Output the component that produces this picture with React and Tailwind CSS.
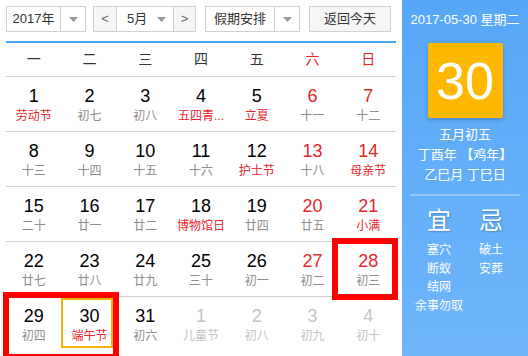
import React from 'react';

const font = { fontFamily: '"Liberation Sans", "Noto Sans CJK SC", sans-serif' };

const weeks = [
  [['1', '劳动节', 'f'], ['2', '初七'], ['3', '初八'], ['4', '五四青...', 'f'], ['5', '立夏', 'f'], ['6', '十一', 'w'], ['7', '十二', 'w']],
  [['8', '十三'], ['9', '十四'], ['10', '十五'], ['11', '十六'], ['12', '护士节', 'f'], ['13', '十八', 'w'], ['14', '母亲节', 'wf']],
  [['15', '二十'], ['16', '廿一'], ['17', '廿二'], ['18', '博物馆日', 'f'], ['19', '廿四'], ['20', '廿五', 'w'], ['21', '小满', 'wf']],
  [['22', '廿七'], ['23', '廿八'], ['24', '廿九'], ['25', '三十'], ['26', '初一'], ['27', '初二', 'w'], ['28', '初三', 'w']],
  [['29', '初四'], ['30', '端午节', 'f'], ['31', '初六'], ['1', '儿童节', 'o'], ['2', '初八', 'o'], ['3', '初九', 'o'], ['4', '初十', 'o']],
];

function Caret() {
  return (
    <svg width="9" height="5" viewBox="0 0 9 5">
      <path d="M0 0 L9 0 L4.5 5 Z" fill="#999" />
    </svg>
  );
}

function Cell({ d }) {
  const [num, lunar, kind = ''] = d;
  const other = kind.includes('o');
  const numColor = other ? 'text-[#c4c4c4]' : kind.includes('w') ? 'text-[#e3262b]' : 'text-black';
  const lunarColor = other ? 'text-[#c4c4c4]' : kind.includes('f') ? 'text-[#e3262b]' : 'text-[#8c8c8c]';
  return (
    <div className="flex flex-col items-center pt-[9px]">
      <span className={`text-[18px] leading-[20px] ${numColor}`}>{num}</span>
      <span className={`text-[12px] leading-[20px] whitespace-nowrap ${lunarColor}`}>{lunar}</span>
    </div>
  );
}

export default function App() {
  return (
    <div className="relative flex w-[528px] h-[356px] bg-white overflow-hidden" style={font}>
      <div className="w-[402px] px-[6px] pt-[6px]">
        <div className="flex items-center h-[26px] text-[13px] text-[#333] whitespace-nowrap">
          <div className="flex h-full w-[80px] border border-[#d0d0d0]">
            <div className="flex-1 flex items-center justify-center border-r border-[#d0d0d0]">2017年</div>
            <div className="w-[24px] flex items-center justify-center"><Caret /></div>
          </div>
          <div className="flex h-full w-[103px] ml-[7px] border border-[#d0d0d0]">
            <div className="w-[23px] flex items-center justify-center bg-[#f5f5f5] border-r border-[#d0d0d0] text-[#666]">&lt;</div>
            <div className="flex-1 flex items-center justify-between pl-[10px] pr-[7px]">5月<Caret /></div>
            <div className="w-[22px] flex items-center justify-center bg-[#f5f5f5] border-l border-[#d0d0d0] text-[#666]">&gt;</div>
          </div>
          <div className="flex h-full w-[95px] ml-[9px] border border-[#d0d0d0]">
            <div className="flex-1 flex items-center justify-center border-r border-[#d0d0d0]">假期安排</div>
            <div className="w-[24px] flex items-center justify-center"><Caret /></div>
          </div>
          <div className="flex h-full w-[82px] ml-[9px] items-center justify-center border border-[#d0d0d0] bg-[#f6f6f6]">返回今天</div>
        </div>
        <div className="mt-[9px] h-[2px] bg-[#4ba4f2]" />
        <div className="grid grid-cols-7 h-[34px] items-center text-center text-[14px] text-[#333] border-b border-[#cfcfcf]">
          <span>一</span><span>二</span><span>三</span><span>四</span><span>五</span>
          <span className="text-[#e3262b]">六</span><span className="text-[#e3262b]">日</span>
        </div>
        {weeks.map((w, i) => (
          <div key={i} className={`grid grid-cols-7 h-[55px] ${i < 4 ? 'border-b border-[#cfcfcf]' : ''}`}>
            {w.map((d, j) => <Cell key={j} d={d} />)}
          </div>
        ))}
      </div>

      <div className="flex-1 flex flex-col items-center bg-gradient-to-b from-[#56a6f7] to-[#6fb6fb] text-white">
        <div className="mt-[11px] text-[13px] leading-[18px]">2017-05-30 星期二</div>
        <div className="mt-[14px] w-[75px] h-[75px] rounded-[2px] bg-[#ffb800] shadow-[0_2px_4px_rgba(0,0,0,0.2)] flex items-center justify-center text-[52px] leading-none">30</div>
        <div className="mt-[7px] flex flex-col items-center text-[13px] leading-[20px]">
          <span>五月初五</span>
          <span>丁酉年 【鸡年】</span>
          <span>乙巳月 丁巳日</span>
        </div>
        <div className="mt-[9px] w-[110px] h-[2px] bg-[#95c9fb]" />
        <div className="mt-[11px] flex w-full px-[12px] justify-between">
          <div className="w-[50px] flex flex-col items-center">
            <span className="text-[24px] leading-[28px] [text-shadow:1px_1px_2px_rgba(0,0,0,0.25)]">宜</span>
            <div className="mt-[6px] flex flex-col items-center text-[12px] leading-[18.5px] whitespace-nowrap">
              <span>塞穴</span><span>断蚁</span><span>结网</span><span>余事勿取</span>
            </div>
          </div>
          <div className="w-[50px] flex flex-col items-center">
            <span className="text-[24px] leading-[28px] [text-shadow:1px_1px_2px_rgba(0,0,0,0.25)]">忌</span>
            <div className="mt-[6px] flex flex-col items-center text-[12px] leading-[18.5px]">
              <span>破土</span><span>安葬</span>
            </div>
          </div>
        </div>
      </div>

      <div className="absolute left-[61px] top-[298px] w-[52px] h-[50px] border-2 border-[#f5b400]" />
      <div className="absolute left-[332px] top-[238px] w-[66px] h-[62px] border-[6px] border-[#ff0000]" />
      <div className="absolute left-[3px] top-[292px] w-[116px] h-[68px] border-[6px] border-[#ff0000]" />
    </div>
  );
}
